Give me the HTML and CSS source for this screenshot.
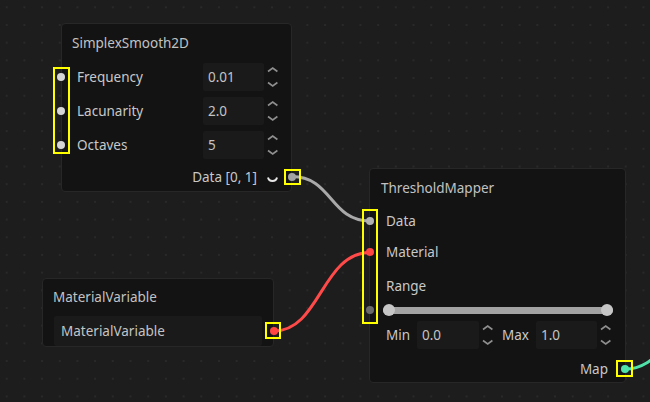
FILE: index.html
```html
<!DOCTYPE html>
<html>
<head>
<meta charset="utf-8">
<link rel="stylesheet" href="styles.css">
</head>
<body>
<div class="canvas">
  <svg class="wires" width="650" height="402" viewBox="0 0 650 402">
    <path d="M292 176.5 C332 176.5, 330 221, 370 221" stroke="#a9a9a9" stroke-width="3" fill="none"/>
    <path d="M274 331 C320 331, 322 252.5, 370 252.5" stroke="#ff4a4a" stroke-width="3" fill="none"/>
    <path d="M625 369 C660 369, 665 330, 700 330" stroke="#4fe3a9" stroke-width="3" fill="none"/>
  </svg>

  <div class="node node-simplex">
    <div class="node-title">SimplexSmooth2D</div>
    <div class="rows">
      <div class="row">
        <span class="port port-in port-light"></span>
        <span class="label">Frequency</span>
        <span class="field">0.01</span>
        <svg class="spinner" viewBox="0 0 17 28"><path d="M4 8.5 L8.7 5 L13.4 8.5 M4 19.5 L8.7 23 L13.4 19.5"/></svg>
      </div>
      <div class="row">
        <span class="port port-in port-light"></span>
        <span class="label">Lacunarity</span>
        <span class="field">2.0</span>
        <svg class="spinner" viewBox="0 0 17 28"><path d="M4 8.5 L8.7 5 L13.4 8.5 M4 19.5 L8.7 23 L13.4 19.5"/></svg>
      </div>
      <div class="row">
        <span class="port port-in port-light"></span>
        <span class="label">Octaves</span>
        <span class="field">5</span>
        <svg class="spinner" viewBox="0 0 17 28"><path d="M4 8.5 L8.7 5 L13.4 8.5 M4 19.5 L8.7 23 L13.4 19.5"/></svg>
      </div>
    </div>
    <div class="row out-row">
      <span class="label">Data [0, 1]</span>
      <svg class="dropdown" viewBox="0 0 17 26"><path d="M4 13.5 Q4.8 17, 8.5 17 Q12.2 17, 13 13.5"/></svg>
      <span class="port port-out port-gray"></span>
    </div>
    <div class="hl hl-simplex-in"></div>
    <div class="hl hl-simplex-out"></div>
  </div>

  <div class="node node-threshold">
    <div class="node-title">ThresholdMapper</div>
    <div class="row row-data">
      <span class="port port-in port-gray-light"></span>
      <span class="label">Data</span>
    </div>
    <div class="row row-material">
      <span class="port port-in port-red"></span>
      <span class="label">Material</span>
    </div>
    <div class="row row-range">
      <span class="label">Range</span>
    </div>
    <div class="slider-row">
      <span class="port port-in port-dark"></span>
      <div class="slider">
        <span class="handle handle-min"></span>
        <span class="handle handle-max"></span>
      </div>
    </div>
    <div class="row minmax-row">
      <span class="mm-label">Min</span>
      <span class="field field-min">0.0</span>
      <svg class="spinner" viewBox="0 0 17 28"><path d="M4 8.5 L8.7 5 L13.4 8.5 M4 19.5 L8.7 23 L13.4 19.5"/></svg>
      <span class="mm-label mm-max">Max</span>
      <span class="field field-max">1.0</span>
      <svg class="spinner" viewBox="0 0 17 28"><path d="M4 8.5 L8.7 5 L13.4 8.5 M4 19.5 L8.7 23 L13.4 19.5"/></svg>
    </div>
    <div class="row map-row">
      <span class="label">Map</span>
      <span class="port port-out port-teal"></span>
    </div>
    <div class="hl hl-threshold-in"></div>
    <div class="hl hl-threshold-out"></div>
  </div>

  <div class="node node-material">
    <div class="node-title">MaterialVariable</div>
    <div class="mat-field">
      <span>MaterialVariable</span>
      <span class="port port-out port-red"></span>
    </div>
    <div class="hl hl-material-out"></div>
  </div>
</div>
</body>
</html>
```

FILE: styles.css
```css
html, body {
  margin: 0;
  padding: 0;
  background: #1d1d1d;
}

.canvas {
  position: relative;
  width: 650px;
  height: 402px;
  overflow: hidden;
  background-color: #1d1d1d;
  background-image: radial-gradient(circle, #292929 0.9px, transparent 1.3px);
  background-size: 17.7px 17.7px;
  background-position: -2.15px -1.55px;
  font-family: "Noto Sans", "Open Sans", sans-serif;
  font-size: 13.5px;
  color: #c8c8c8;
}

.wires {
  position: absolute;
  left: 0;
  top: 0;
}

.node {
  position: absolute;
  box-sizing: border-box;
  background: #131313;
  border: 1px solid #272727;
  border-radius: 4px;
}

.node-title {
  height: 20px;
  line-height: 20px;
  color: #c2c2c2;
  white-space: nowrap;
}

/* SimplexSmooth2D */
.node-simplex {
  left: 61px;
  top: 23px;
  width: 231px;
  height: 169px;
  padding: 9px 10px 0 10px;
}

.rows {
  margin-top: 10px;
  display: flex;
  flex-direction: column;
  gap: 6px;
}

.row {
  position: relative;
  display: flex;
  align-items: center;
  height: 28px;
}

.label {
  margin-left: 5px;
  flex: 1;
  white-space: nowrap;
}

.field {
  box-sizing: border-box;
  width: 61px;
  height: 28px;
  line-height: 28px;
  padding-left: 5px;
  background: #1a1a1a;
  border-radius: 2px;
  color: #c4c4c4;
  flex: none;
}

.spinner {
  width: 17px;
  height: 28px;
  flex: none;
}

.spinner path {
  fill: none;
  stroke: #8f8f8f;
  stroke-width: 1.6;
}

.out-row {
  margin-top: 5px;
  height: 26px;
  justify-content: flex-end;
}

.out-row .label {
  flex: none;
}

.dropdown {
  width: 17px;
  height: 26px;
  margin-left: 7px;
  flex: none;
}

.dropdown path {
  fill: none;
  stroke: #e6e6e6;
  stroke-width: 2;
}

/* ports */
.port {
  position: absolute;
  width: 8px;
  height: 8px;
  border-radius: 50%;
  top: 50%;
  margin-top: -4px;
}

.port-in {
  left: -15px;
}

.port-out {
  right: -15px;
}

.port-light { background: #d6d6d6; }
.port-gray { background: #a3a3a3; }
.port-gray-light { background: #b2b2b2; }
.port-red { background: #ff4444; }
.port-dark { background: #6b6b6b; }
.port-teal { background: #4fe3a9; }

/* highlight boxes */
.hl {
  position: absolute;
  box-sizing: border-box;
  border: 2px solid #ffff00;
}

.hl-simplex-in {
  left: -9px;
  top: 43px;
  width: 17px;
  height: 87px;
}

.hl-simplex-out {
  left: 222px;
  top: 145px;
  width: 17px;
  height: 16px;
}

/* ThresholdMapper */
.node-threshold {
  left: 369px;
  top: 168px;
  width: 257px;
  height: 215px;
  padding: 9px 11px 0 11px;
}

.row-data { margin-top: 9px; }
.row-material { margin-top: 3px; }
.row-range { margin-top: 6px; }

.slider-row {
  position: relative;
  height: 20px;
  display: flex;
  align-items: center;
}

.slider {
  position: relative;
  flex: 1;
  margin: 0 1px 0 2px;
  height: 7px;
  border-radius: 4px;
  background: #a3a3a3;
}

.handle {
  position: absolute;
  top: 50%;
  width: 12px;
  height: 12px;
  margin-top: -6px;
  border-radius: 50%;
  background: #c6c6c6;
}

.handle-min { left: 0; }
.handle-max { right: 0; }

.minmax-row {
  margin-top: 1px;
}

.mm-label {
  margin-left: 5px;
  width: 31px;
  flex: none;
}

.mm-max {
  margin-left: 6px;
  width: 34px;
}

.field-min {
  width: 62px;
}

.field-max {
  width: 61px;
}

.map-row {
  margin-top: 6px;
  height: 27px;
  justify-content: flex-end;
  padding-right: 6px;
}

.map-row .label {
  flex: none;
}

.hl-threshold-in {
  left: -8px;
  top: 40px;
  width: 16px;
  height: 115px;
}

.hl-threshold-out {
  left: 246px;
  top: 191px;
  width: 17px;
  height: 17px;
}

/* MaterialVariable */
.node-material {
  left: 42px;
  top: 278px;
  width: 232px;
  height: 69px;
  padding: 8px 10px 0 10px;
}

.mat-field {
  position: relative;
  margin: 9px 1px 0 1px;
  height: 30px;
  line-height: 30px;
  padding-left: 7px;
  background: #1a1a1a;
  border-radius: 2px;
  color: #c4c4c4;
}

.mat-field .port {
  right: -16px;
}

.hl-material-out {
  left: 222px;
  top: 43px;
  width: 16px;
  height: 17px;
}
```
